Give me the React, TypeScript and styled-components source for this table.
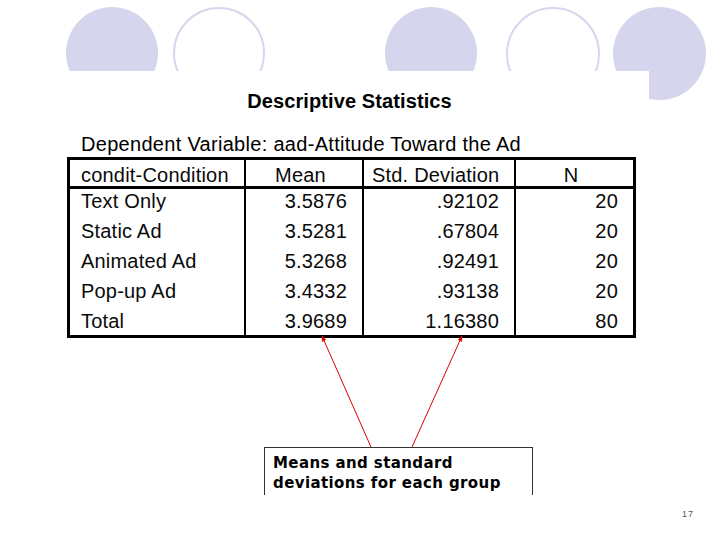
import React from "react";
import styled, { createGlobalStyle } from "styled-components";

const GlobalStyle = createGlobalStyle`
  html, body {
    margin: 0;
    padding: 0;
    background: #ffffff;
  }
  body {
    width: 720px;
    height: 540px;
    overflow: hidden;
    font-family: "Liberation Sans", Arial, sans-serif;
    color: #000;
  }
`;

const Slide = styled.div`
  position: relative;
  width: 720px;
  height: 540px;
  background: #fff;
  display: flex;
  flex-direction: column;
`;

const Decor = styled.div`
  display: flex;
  align-items: flex-start;
  height: 64px;
  margin-top: 7px;
  padding-left: 66px;
`;

const Clip = styled.div<{ $gap: number; $size: number }>`
  margin-left: ${(p) => p.$gap}px;
  width: ${(p) => p.$size}px;
  height: 64px;
  overflow: hidden;
  flex: none;
`;

const Disc = styled.div<{ $size: number }>`
  width: ${(p) => p.$size}px;
  height: ${(p) => p.$size}px;
  border-radius: 50%;
  background: #d5d5ed;
`;

const Ring = styled.div<{ $size: number }>`
  box-sizing: border-box;
  width: ${(p) => p.$size}px;
  height: ${(p) => p.$size}px;
  border-radius: 50%;
  border: 2px solid #d6d6ec;
`;

const NotchedDisc = styled.div<{ $gap: number }>`
  margin-left: ${(p) => p.$gap}px;
  width: 93px;
  height: 93px;
  flex: none;
  border-radius: 50%;
  background: #d5d5ed;
  clip-path: polygon(0 0, 100% 0, 100% 100%, 38.7% 100%, 38.7% 68.8%, 0 68.8%);
  position: relative;
  z-index: 0;
`;

const Content = styled.div`
  width: 569px;
  margin-left: 67px;
  display: flex;
  flex-direction: column;
  position: relative;
  z-index: 1;
`;

const Title = styled.div`
  margin-top: 18px;
  text-align: center;
  font-weight: bold;
  font-size: 20px;
  line-height: 24px;
  padding-right: 4px;
  letter-spacing: 0.1px;
`;

const Subtitle = styled.div`
  margin-top: 19px;
  padding-left: 14px;
  font-size: 20px;
  line-height: 24px;
  letter-spacing: 0.3px;
`;

const Grid = styled.div`
  margin-top: 1px;
  box-sizing: border-box;
  width: 569px;
  border: 3px solid #000;
  display: grid;
  grid-template-columns: 174px 118px 152px 119px;
  grid-template-rows: 29px repeat(4, 30px) 26px;
  font-size: 20px;
  letter-spacing: 0.2px;
  overflow: hidden;
`;

const Cell = styled.div<{ $col: number; $head?: boolean; $align: "left" | "center" | "right" }>`
  box-sizing: border-box;
  border-left: ${(p) => (p.$col > 0 ? "2px solid #000" : "none")};
  border-bottom: ${(p) => (p.$head ? "3px solid #000" : "none")};
  text-align: ${(p) => p.$align};
  padding: ${(p) => (p.$head ? "4px" : "0")} 15px 0 ${(p) => (p.$col === 0 ? "11px" : "8px")};
  line-height: ${(p) => (p.$head ? "22px" : "24px")};
  white-space: nowrap;
  color: #0a0a0a;
`;

const HeadCell = styled(Cell)``;

const Callout = styled.div`
  margin-top: 109px;
  margin-left: 197px;
  box-sizing: border-box;
  width: 269px;
  height: 48px;
  border: 1px solid #333;
  border-bottom: none;
  padding: 5px 0 0 8px;
  font-family: "DejaVu Sans", Verdana, sans-serif;
  font-weight: bold;
  font-size: 15px;
  line-height: 20px;
  letter-spacing: 0.4px;
  overflow: hidden;
  background: #fff;
  white-space: nowrap;
`;

const Footer = styled.div`
  display: flex;
  justify-content: flex-end;
  padding-right: 26px;
  margin-top: 14px;
  font-size: 9px;
  color: #555;
  letter-spacing: 1px;
`;

const Arrows = styled.svg`
  position: absolute;
  left: 0;
  top: 0;
  width: 720px;
  height: 540px;
  pointer-events: none;
  z-index: 2;
`;

const rows: [string, string, string, string][] = [
  ["Text Only", "3.5876", ".92102", "20"],
  ["Static Ad", "3.5281", ".67804", "20"],
  ["Animated Ad", "5.3268", ".92491", "20"],
  ["Pop-up Ad", "3.4332", ".93138", "20"],
  ["Total", "3.9689", "1.16380", "80"],
];

const headers = ["condit-Condition", "Mean", "Std. Deviation", "N"];

export default function App() {
  return (
    <>
      <GlobalStyle />
      <Slide>
        <Decor>
          <Clip $gap={0} $size={92}>
            <Disc $size={92} />
          </Clip>
          <Clip $gap={15} $size={92}>
            <Ring $size={92} />
          </Clip>
          <Clip $gap={120} $size={92}>
            <Disc $size={92} />
          </Clip>
          <Clip $gap={29} $size={94}>
            <Ring $size={94} />
          </Clip>
          <NotchedDisc $gap={13} />
        </Decor>
        <Content>
          <Title>Descriptive Statistics</Title>
          <Subtitle>Dependent Variable: aad-Attitude Toward the Ad</Subtitle>
          <Grid>
            {headers.map((h, i) => (
              <HeadCell key={h} $col={i} $head $align={i === 0 ? "left" : "center"}>
                {h}
              </HeadCell>
            ))}
            {rows.map((r) =>
              r.map((v, i) => (
                <Cell key={r[0] + i} $col={i} $align={i === 0 ? "left" : "right"}>
                  {v}
                </Cell>
              ))
            )}
          </Grid>
          <Callout>
            Means and standard
            <br />
            deviations for each group
          </Callout>
        </Content>
        <Footer>17</Footer>
        <Arrows viewBox="0 0 720 540">
          <defs>
            <marker id="tip" viewBox="0 0 10 10" refX="9" refY="5" markerWidth="6" markerHeight="6" orient="auto">
              <path d="M0,1 L10,5 L0,9 z" fill="#e00000" />
            </marker>
          </defs>
          <line x1="371" y1="447" x2="322" y2="336" stroke="#e00000" strokeWidth="1" markerEnd="url(#tip)" />
          <line x1="412" y1="447" x2="462" y2="336" stroke="#e00000" strokeWidth="1" markerEnd="url(#tip)" />
        </Arrows>
      </Slide>
    </>
  );
}
